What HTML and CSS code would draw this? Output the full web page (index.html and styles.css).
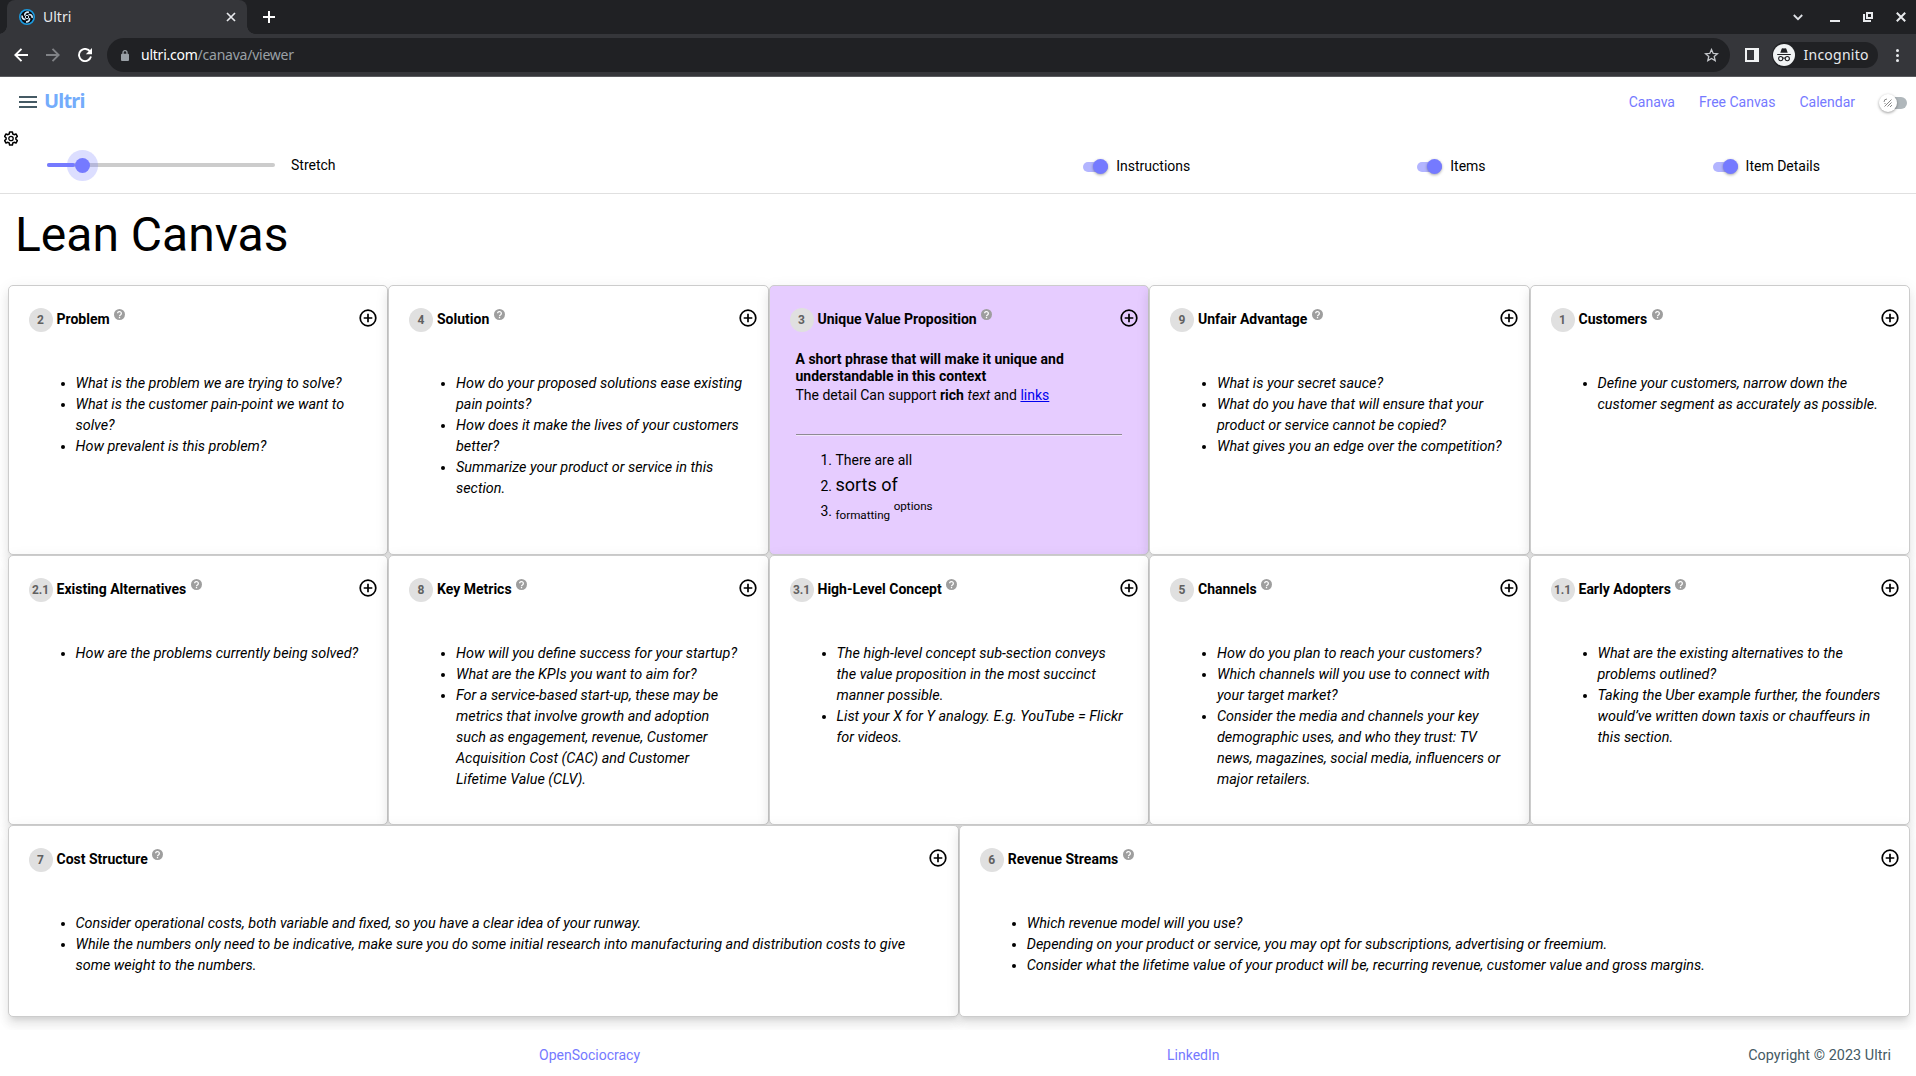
FILE: index.html
```html
<!DOCTYPE html>
<html lang="en">
<head>
<meta charset="utf-8">
<title>Ultri</title>
<link rel="stylesheet" href="styles.css">
</head>
<body>
<svg class="defs" width="0" height="0">
  <symbol id="help" viewBox="0 0 24 24"><path fill="#9e9e9e" d="M12 0a12 12 0 1 0 0 24a12 12 0 0 0 0-24z"/><path fill="none" stroke="#fff" stroke-width="2.800" d="M8 9.500a4 4 0 1 1 6.600 3.100c-1.600 1.100-2.600 1.800-2.600 3.400M12 17.600v2.600"/></symbol>
  <symbol id="plus" viewBox="0 0 18 18"><circle cx="9" cy="9" r="7.800" fill="none" stroke="#000" stroke-width="1.700"/><path d="M9 4.700v8.600M4.700 9h8.600" stroke="#000" stroke-width="1.700"/></symbol>
</svg>

<div class="tabstrip">
  <div class="tab">
    <svg width="16" height="16" viewBox="0 0 16 16"><circle cx="8" cy="8" r="7.200" fill="#05080f" stroke="#1b9be0" stroke-width="1.600"/><path d="M6 6.500C5 4.500 7.500 2.600 10 3.400M9.600 5.800c2-1 4 .8 3.500 3.200M10.300 9.200c.9 2-.9 3.900-3.300 3.600M6.500 10.300c-2.200.4-3.800-1.500-3.300-3.800" fill="none" stroke="#d5e9f5" stroke-width="1.700"/><circle cx="8" cy="8" r="1.700" fill="none" stroke="#d5e9f5"/></svg>
    <span class="tab-name">Ultri</span>
    <svg width="10" height="10" viewBox="0 0 10 10"><path d="M1 1l8 8M9 1l-8 8" stroke="#e8eaed" stroke-width="1.700"/></svg>
  </div>
  <svg class="newtab" width="12" height="12" viewBox="0 0 12 12"><path d="M6 0v12M0 6h12" stroke="#fff" stroke-width="2"/></svg>
  <div class="winbtns">
    <svg width="10" height="7" viewBox="0 0 10 7"><path d="M.8 1L5 5.200 9.200 1" fill="none" stroke="#dee1e6" stroke-width="1.800"/></svg>
    <svg width="10" height="10" viewBox="0 0 10 10"><path d="M0 9h10" stroke="#e8eaed" stroke-width="2"/></svg>
    <svg width="10" height="10" viewBox="0 0 10 10"><path d="M4 1h5v5H4zM1 2v7h7" fill="none" stroke="#e8eaed" stroke-width="2"/></svg>
    <svg width="10" height="10" viewBox="0 0 10 10"><path d="M.8.800l8.400 8.400M9.200.800L.8 9.200" stroke="#e8eaed" stroke-width="2"/></svg>
  </div>
</div>
<div class="toolbar">
  <div class="navbtns">
    <svg width="14" height="14" viewBox="0 0 14 14"><path d="M14 7H1.500M7.500.800L1.300 7l6.200 6.200" fill="none" stroke="#fff" stroke-width="1.900"/></svg>
    <svg width="14" height="14" viewBox="0 0 14 14"><path d="M0 7h12.500M6.500.800L12.700 7l-6.200 6.200" fill="none" stroke="#808286" stroke-width="1.900"/></svg>
    <svg width="14" height="14" viewBox="0 0 14 14"><path d="M12.300 3.800A6.100 6.100 0 1 0 13 8.600" fill="none" stroke="#fff" stroke-width="1.900"/><path d="M14 0v6.200H7.800z" fill="#fff"/></svg>
  </div>
  <div class="omnibox">
    <svg width="8" height="11" viewBox="0 0 8 11"><path d="M2 4V2.700a2 2 0 0 1 4 0V4" fill="none" stroke="#9aa0a6" stroke-width="1.300"/><rect y="3.800" width="8" height="7.200" rx="1" fill="#9aa0a6"/></svg>
    <span class="url"><b>ultri.com</b>/canava/viewer</span>
    <svg class="star" width="15" height="14" viewBox="0 0 15 14"><path d="M7.500 1.500l1.700 3.900 4.200.3-3.200 2.800 1 4.100-3.700-2.200-3.700 2.200 1-4.100L1.600 5.700l4.200-.3z" fill="none" stroke="#c4c7cb" stroke-width="1.300"/></svg>
  </div>
  <svg class="panel" width="14" height="14" viewBox="0 0 14 14"><path fill="#f1f3f4" fill-rule="evenodd" d="M0 0h14v14H0zM2 2v10h7V2z"/></svg>
  <div class="incog">
    <svg width="22" height="22" viewBox="0 0 22 22"><circle cx="11" cy="11" r="11" fill="#f1f3f4"/><path fill="#202124" d="M7.300 8.800l1.400-4q.3-.9 1.200-.6l1.100.4 1.100-.4q.9-.3 1.200.6l1.400 4zM4.200 9.900h13.600v1.100H4.200z"/><g fill="none" stroke="#202124" stroke-width="1.100"><circle cx="7.700" cy="14.600" r="2.100"/><circle cx="14.300" cy="14.600" r="2.100"/><path d="M9.800 14.300q1.200-.7 2.400 0"/></g></svg>
    <span>Incognito</span>
  </div>
  <svg class="dots" width="3" height="13" viewBox="0 0 3 13"><g fill="#e8eaed"><circle cx="1.500" cy="1.500" r="1.500"/><circle cx="1.500" cy="6.500" r="1.500"/><circle cx="1.500" cy="11.500" r="1.500"/></g></svg>
</div>

<header class="site">
  <svg width="18" height="12" viewBox="0 0 18 12"><path d="M0 1h18M0 6h18M0 11h18" stroke="#455a64" stroke-width="2"/></svg>
  <span class="brand">Ultri</span>
  <nav><a>Canava</a><a>Free Canvas</a><a>Calendar</a></nav>
  <span class="mode"><span class="mode-knob"><svg width="10" height="10" viewBox="0 0 10 10"><path d="M1.500 8.500L8.500 1.500M4.500 8.500l4-4M1 4a3 3 0 0 1 3-3M1.500 6l1-1M7 9l2-2" fill="none" stroke="#888" stroke-width="1"/></svg></span></span>
</header>

<section class="settings">
  <svg class="gear" width="14" height="15" viewBox="0 0 14 15"><path d="M5.600 1h2.800l.4 2 1.300.7 1.900-.7 1.400 2.400L11.900 6.800v1.400l1.500 1.400L12 12l-1.900-.7-1.300.7-.4 2H5.600l-.4-2-1.300-.7L2 12 .6 9.600l1.500-1.400V6.800L.6 5.400 2 3l1.900.7L5.200 3z" fill="none" stroke="#000" stroke-width="1.500" stroke-linejoin="round"/><circle cx="7" cy="7.500" r="2.200" fill="none" stroke="#000" stroke-width="1.300"/></svg>
  <div class="stretch"><div class="slider"><div class="slider-fill"></div><div class="slider-knob"></div></div><span>Stretch</span></div>
  <div class="switches">
    <label><i class="switch"></i>Instructions</label>
    <label><i class="switch"></i>Items</label>
    <label><i class="switch"></i>Item Details</label>
  </div>
</section>

<main>
  <h1>Lean Canvas</h1>
  <div class="canvas">
    <article class="cell"><div class="head"><span class="num">2</span><h2>Problem</h2><svg class="help"><use href="#help"/></svg><svg class="plus"><use href="#plus"/></svg></div>
      <ul><li>What is the problem we are trying to solve?</li><li>What is the customer pain-point we want to solve?</li><li>How prevalent is this problem?</li></ul></article>
    <article class="cell"><div class="head"><span class="num">4</span><h2>Solution</h2><svg class="help"><use href="#help"/></svg><svg class="plus"><use href="#plus"/></svg></div>
      <ul><li>How do your proposed solutions ease existing pain points?</li><li>How does it make the lives of your customers better?</li><li>Summarize your product or service in this section.</li></ul></article>
    <article class="cell accent"><div class="head"><span class="num">3</span><h2>Unique Value Proposition</h2><svg class="help"><use href="#help"/></svg><svg class="plus"><use href="#plus"/></svg></div>
      <div class="item"><h3>A short phrase that will make it unique and understandable in this context</h3>
        <p>The detail Can support <b>rich</b> <em>text</em> and <a class="link">links</a></p>
        <hr>
        <ol><li>There are all</li><li><span class="big">sorts of</span></li><li><sub>formatting</sub> <sup>options</sup></li></ol></div></article>
    <article class="cell"><div class="head"><span class="num">9</span><h2>Unfair Advantage</h2><svg class="help"><use href="#help"/></svg><svg class="plus"><use href="#plus"/></svg></div>
      <ul><li>What is your secret sauce?</li><li>What do you have that will ensure that your product or service cannot be copied?</li><li>What gives you an edge over the competition?</li></ul></article>
    <article class="cell"><div class="head"><span class="num">1</span><h2>Customers</h2><svg class="help"><use href="#help"/></svg><svg class="plus"><use href="#plus"/></svg></div>
      <ul><li>Define your customers, narrow down the customer segment as accurately as possible.</li></ul></article>

    <article class="cell"><div class="head"><span class="num">2.1</span><h2>Existing Alternatives</h2><svg class="help"><use href="#help"/></svg><svg class="plus"><use href="#plus"/></svg></div>
      <ul><li>How are the problems currently being solved?</li></ul></article>
    <article class="cell"><div class="head"><span class="num">8</span><h2>Key Metrics</h2><svg class="help"><use href="#help"/></svg><svg class="plus"><use href="#plus"/></svg></div>
      <ul><li>How will you define success for your startup?</li><li>What are the KPIs you want to aim for?</li><li>For a service-based start-up, these may be metrics that involve growth and adoption<br>such as engagement, revenue, Customer<br>Acquisition Cost (CAC) and Customer<br>Lifetime Value (CLV).</li></ul></article>
    <article class="cell"><div class="head"><span class="num">3.1</span><h2>High-Level Concept</h2><svg class="help"><use href="#help"/></svg><svg class="plus"><use href="#plus"/></svg></div>
      <ul><li>The high-level concept sub-section conveys the value proposition in the most succinct manner possible.</li><li>List your X for Y analogy. E.g. YouTube = Flickr for videos.</li></ul></article>
    <article class="cell"><div class="head"><span class="num">5</span><h2>Channels</h2><svg class="help"><use href="#help"/></svg><svg class="plus"><use href="#plus"/></svg></div>
      <ul><li>How do you plan to reach your customers?</li><li>Which channels will you use to connect with your target market?</li><li>Consider the media and channels your key demographic uses, and who they trust: TV news, magazines, social media, influencers or major retailers.</li></ul></article>
    <article class="cell"><div class="head"><span class="num">1.1</span><h2>Early Adopters</h2><svg class="help"><use href="#help"/></svg><svg class="plus"><use href="#plus"/></svg></div>
      <ul><li>What are the existing alternatives to the problems outlined?</li><li>Taking the Uber example further, the founders would’ve written down taxis or chauffeurs in this section.</li></ul></article>

    <article class="cell wide"><div class="head"><span class="num">7</span><h2>Cost Structure</h2><svg class="help"><use href="#help"/></svg><svg class="plus"><use href="#plus"/></svg></div>
      <ul><li>Consider operational costs, both variable and fixed, so you have a clear idea of your runway.</li><li>While the numbers only need to be indicative, make sure you do some initial research into manufacturing and distribution costs to give some weight to the numbers.</li></ul></article>
    <article class="cell wide"><div class="head"><span class="num">6</span><h2>Revenue Streams</h2><svg class="help"><use href="#help"/></svg><svg class="plus"><use href="#plus"/></svg></div>
      <ul><li>Which revenue model will you use?</li><li>Depending on your product or service, you may opt for subscriptions, advertising or freemium.</li><li>Consider what the lifetime value of your product will be, recurring revenue, customer value and gross margins.</li></ul></article>
  </div>
</main>
<footer><a>OpenSociocracy</a><a>LinkedIn</a><span>Copyright © 2023 Ultri</span></footer>
</body>
</html>
```
FILE: styles.css
```css
* { box-sizing: border-box; }
body { margin: 0; height: 1076px; overflow: hidden; background: #fff; color: #000; font: 14px/21px Roboto, sans-serif; display: flex; flex-direction: column; }
svg { display: block; flex: none; }
.defs { position: absolute; }

/* browser frame */
.tabstrip { height: 34px; flex: none; background: #202124; display: flex; align-items: center; padding-left: 7px; font: 14px "Noto Sans", sans-serif; }
.tab { position: relative; width: 240px; height: 34px; background: #35363a; border-radius: 8px 8px 0 0; display: flex; align-items: center; padding: 0 11px 0 12px; color: #e8eaed; }
.tab::before, .tab::after { content: ""; position: absolute; bottom: 0; width: 8px; height: 8px; }
.tab::before { left: -8px; background: radial-gradient(circle at 0 0, transparent 7.5px, #35363a 8px); }
.tab::after { right: -8px; background: radial-gradient(circle at 100% 0, transparent 7.5px, #35363a 8px); }
.tab-name { flex: 1; padding-left: 8px; margin-top: -1px; }
.newtab { margin-left: 16px; }
.winbtns { margin-left: auto; display: flex; align-items: center; gap: 23px; padding-right: 10px; }
.winbtns svg:first-child { margin-right: 4px; }
.toolbar { height: 43px; flex: none; background: #35363a; border-bottom: 1px solid #5a5b5f; display: flex; align-items: center; padding: 0 17px 0 14px; font: 14px "Noto Sans", sans-serif; }
.navbtns { display: flex; gap: 18px; width: 93px; }
.omnibox { flex: 1; height: 34px; background: #202124; border-radius: 17px; display: flex; align-items: center; padding: 0 11px 0 14px; color: #9aa0a6; }
.url { flex: 1; padding-left: 12px; margin-top: -2px; letter-spacing: -.24px; }
.url b { font-weight: 400; color: #fff; }
.panel { margin: 0 13px 0 15px; }
.incog { width: 106px; height: 26px; border-radius: 13px; background: #202124; display: flex; align-items: center; gap: 8.5px; padding-left: 1px; color: #e8eaed; }
.incog span { letter-spacing: .25px; margin-top: -1px; }
.dots { margin-left: 18px; }

/* site header */
.site { height: 49px; flex: none; display: flex; align-items: center; padding: 1px 9px 0 19px; }
.brand { margin: -3px 0 0 7px; font: 700 20px "Noto Sans", sans-serif; letter-spacing: -.8px; color: #74acfb; }
nav { margin-left: auto; display: flex; gap: 24px; }
a { color: #7579ff; }
.mode { margin: 2px 0 0 26px; width: 26px; height: 12px; border-radius: 6px; background: #b0b7bb; display: flex; align-items: center; }
.mode-knob { width: 18px; height: 18px; margin-left: -2px; flex: none; border-radius: 50%; background: #fff; box-shadow: 0 1px 3px rgba(0,0,0,.4); display: grid; place-items: center; }

.settings { height: 68px; flex: none; border-bottom: 1px solid #e0e0e0; display: flex; align-items: flex-start; padding: 5px 0 0 4px; }
.stretch { display: flex; align-items: center; gap: 16px; margin: 24px 0 0 29px; width: 400px; }
.slider { width: 228px; height: 4px; margin-top: -1px; border-radius: 2px; background: #ccc; display: flex; align-items: center; }
.slider-fill { width: 27.5px; height: 4px; border-radius: 2px; background: #757aff; }
.slider-knob { width: 15px; height: 15px; flex: none; border-radius: 50%; background: #757aff; box-shadow: 0 0 0 8px rgba(117,122,255,.25); }
.switches { display: flex; margin: 25px 96px 0 auto; }
.switches label { display: flex; align-items: center; gap: 8px; }
.switches label + label { margin-left: 227px; }
.switch { width: 25px; height: 10px; border-radius: 5px; background: #b3b5ff; display: flex; align-items: center; justify-content: flex-end; }
.switch::after { content: ""; width: 15px; height: 15px; border-radius: 50%; background: #757aff; box-shadow: 0 1px 3px rgba(0,0,0,.35); }

/* canvas */
main { height: 836px; flex: none; overflow: hidden; padding: 0 6px 0 7.5px; }
h1 { margin: 0; height: 91px; padding: 13px 0 0 7.5px; font: 400 48px/56px Roboto, sans-serif; }
.canvas { display: grid; grid-template-columns: repeat(10, 1fr); grid-template-rows: 270px 270px 192px; }
.cell { grid-column: span 2; border: 1px solid #ccc; border-radius: 5px; background: #fff; padding: 22px 10.5px 0 20px; box-shadow: 0 5px 5px -3px rgba(0,0,0,.1), 0 8px 10px 1px rgba(0,0,0,.06), 0 3px 14px 2px rgba(0,0,0,.05); }
.wide { grid-column: span 5; }
.accent { background: #e6ccff; }
.head { display: flex; height: 24px; align-items: center; }
.num { width: 24px; height: 24px; border-radius: 50%; background: #e0e0e0; color: #616161; font: 700 12px/24px Roboto, sans-serif; text-align: center; }
h2 { margin: -2px 0 0 4px; font: 700 14px/20px Roboto, sans-serif; }
.help { width: 11px; height: 11px; margin: -12px 0 0 4.5px; }
.plus { width: 18px; height: 18px; margin: -4px 0 0 auto; }
ul { margin: 41px 0 0 27px; padding: 0 9px 0 20px; font-size: 14.4px; font-style: italic; }
.item { margin: 19px 16px 0 6px; }
h3 { margin: 0; font: 700 14px/17px Roboto, sans-serif; }
p { margin: 0; }
.link { color: #00e; text-decoration: underline; }
hr { margin: 28px 0 14px; border: 0; border-top: 1px solid #8f8a94; height: 2px; border-bottom: 1px solid #f0e6fa; }
ol { margin: 0; padding-left: 40px; }
li { line-height: 21px; }
.big { font-size: 18px; line-height: 28px; }
sub, sup { font-size: 11.67px; line-height: 14.5px; }

footer { flex: 1; display: flex; align-items: center; padding: 5px 25px 0 539px; color: #455a64; }
footer a + a { margin-left: 527px; }
footer span { margin-left: auto; font-size: 14.4px; letter-spacing: .05px; }
```
